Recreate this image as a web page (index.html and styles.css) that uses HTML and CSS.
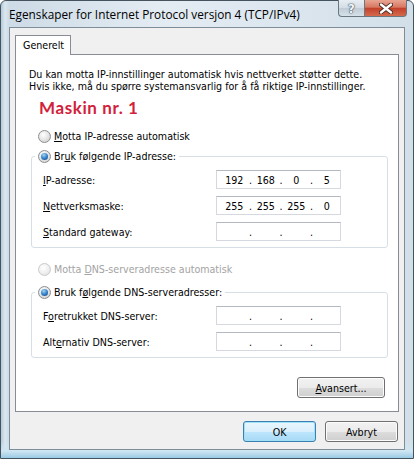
FILE: index.html
```html
<!DOCTYPE html>
<html lang="nb">
<head>
    <meta charset="UTF-8">
    <title>Egenskaper for Internet Protocol versjon 4 (TCP/IPv4)</title>
    <link rel="stylesheet" href="styles.css">
</head>
<body>
    <div class="window">
        <div class="titlebar">
            <span class="title">Egenskaper for Internet Protocol versjon 4 (TCP/IPv4)</span>
            <div class="caption-buttons">
                <span class="cap-btn help">?</span>
                <span class="cap-btn close">
                    <svg width="14" height="11" viewBox="0 0 14 11">
                        <path d="M2 1.5 L12 9.5 M12 1.5 L2 9.5" stroke="#4a2a22" stroke-width="4.2" stroke-linecap="round"/>
                        <path d="M2 1.5 L12 9.5 M12 1.5 L2 9.5" stroke="#fff" stroke-width="2.4" stroke-linecap="round"/>
                    </svg>
                </span>
            </div>
        </div>

        <div class="client">
            <div class="tabs">
                <span class="tab">Generelt</span>
            </div>

            <div class="panel">
                <p class="intro">Du kan motta IP-innstillinger automatisk hvis nettverket støtter dette.<br>Hvis ikke, må du spørre systemansvarlig for å få riktige IP-innstillinger.</p>
                <div class="machine">Maskin nr. 1</div>

                <!-- IP-adresse -->
                <div class="radio"><span class="dot"></span><span><u>M</u>otta IP-adresse automatisk</span></div>
                <fieldset class="group">
                    <legend><span class="radio"><span class="dot checked"></span><span>Br<u>u</u>k følgende IP-adresse:</span></span></legend>
                    <div class="row">
                        <span class="label"><u>I</u>P-adresse:</span>
                        <span class="ipbox"><span>192</span><i>.</i><span>168</span><i>.</i><span>0</span><i>.</i><span>5</span></span>
                    </div>
                    <div class="row">
                        <span class="label"><u>N</u>ettverksmaske:</span>
                        <span class="ipbox"><span>255</span><i>.</i><span>255</span><i>.</i><span>255</span><i>.</i><span>0</span></span>
                    </div>
                    <div class="row">
                        <span class="label"><u>S</u>tandard gateway:</span>
                        <span class="ipbox"><span></span><i>.</i><span></span><i>.</i><span></span><i>.</i><span></span></span>
                    </div>
                </fieldset>

                <!-- DNS -->
                <div class="radio disabled dns-auto"><span class="dot"></span><span>Motta <u>D</u>NS-serveradresse automatisk</span></div>
                <fieldset class="group dns-group">
                    <legend><span class="radio"><span class="dot checked"></span><span>Bruk f<u>ø</u>lgende DNS-serveradresser:</span></span></legend>
                    <div class="row">
                        <span class="label">F<u>o</u>retrukket DNS-server:</span>
                        <span class="ipbox"><span></span><i>.</i><span></span><i>.</i><span></span><i>.</i><span></span></span>
                    </div>
                    <div class="row">
                        <span class="label">Alt<u>e</u>rnativ DNS-server:</span>
                        <span class="ipbox"><span></span><i>.</i><span></span><i>.</i><span></span><i>.</i><span></span></span>
                    </div>
                </fieldset>

                <div class="adv-row">
                    <button class="btn adv"><u>A</u>vansert...</button>
                </div>
            </div>

            <div class="footer">
                <button class="btn default">OK</button>
                <button class="btn">Avbryt</button>
            </div>
        </div>
    </div>
</body>
</html>
```

FILE: styles.css
```css
body {
    margin: 0;
    padding: 0;
    background: #fff;
    font-family: "DejaVu Sans Condensed", "DejaVu Sans", sans-serif;
    font-stretch: condensed;
    font-size: 10.6px;
    color: #000;
}
.window {
    width: 414px;
    height: 459px;
    box-sizing: border-box;
    padding: 0 8px 8px 8px;
    display: flex;
    flex-direction: column;
    border: 1px solid #44535e;
    border-radius: 6px 6px 0 0;
    background:
        linear-gradient(to bottom, rgba(255,255,255,0) 440px, #cfe6f2 450px, #92c6e2 458px),
        linear-gradient(to right, #b3cad9 0px, #dce7ef 4px, #cddbe6 8px, #e4ecf3 40%, #d2dfe9 100%);
}
.titlebar {
    height: 26px;
    display: flex;
    align-items: flex-start;
}
.title {
    font-family: "Open Sans", sans-serif;
    font-stretch: normal;
    font-size: 11.8px;
    margin-top: 5px;
    color: #000;
}
.caption-buttons {
    margin-left: auto;
    margin-right: -2px;
    margin-top: -1px;
    display: flex;
    height: 18px;
}
.cap-btn {
    height: 16px;
    border: 1px solid #6a7680;
    border-top: none;
    display: flex;
    align-items: center;
    justify-content: center;
}
.help {
    width: 25px;
    border-radius: 0 0 0 4px;
    border-right: none;
    background: linear-gradient(to bottom, #e8eef3 0%, #d3dde5 50%, #bfccd6 51%, #d6e1e9 100%);
    font-family: "DejaVu Sans", sans-serif;
    font-weight: bold;
    font-size: 13px;
    color: #f4f7fa;
    text-shadow: 0 0 1px #4d5a65, 0 0 1px #4d5a65, 0 0 2px #4d5a65;
}
.close {
    width: 41px;
    border-radius: 0 0 4px 0;
    background: linear-gradient(to bottom, #e8a593 0%, #d87862 45%, #c2412a 52%, #d56a4c 100%);
}
.client {
    flex: 1;
    background: #f0f0f0;
    border: 1px solid #7d8d99;
    display: flex;
    flex-direction: column;
    padding: 0 5px 7px 5px;
}
.tabs {
    margin-top: 7px;
    display: flex;
}
.tab {
    height: 20px;
    width: 56px;
    box-sizing: border-box;
    padding-left: 7px;
    line-height: 19px;
    border: 1px solid #898c95;
    border-bottom: none;
    background: #fff;
    margin-bottom: -1px;
    position: relative;
    z-index: 1;
}
.panel {
    height: 358px;
    box-sizing: border-box;
    border: 1px solid #898c95;
    background: #fff;
    display: flex;
    flex-direction: column;
}
.intro {
    margin: 13px 0 0 13px;
    line-height: 12px;
}
.machine {
    margin: 7px 0 0 23px;
    height: 18px;
    line-height: 18px;
    font-family: "Lato", sans-serif;
    font-stretch: normal;
    font-weight: bold;
    font-size: 17px;
    letter-spacing: 0.6px;
    color: #d2213a;
}
.radio {
    display: flex;
    align-items: center;
    height: 16px;
    gap: 3px;
}
.panel > .radio {
    margin: 11px 0 0 22px;
}
.dot {
    width: 11px;
    height: 11px;
    border-radius: 50%;
    border: 1px solid #8c8f93;
    background: radial-gradient(circle at 40% 35%, #ffffff 0%, #e8e8e8 45%, #c6c6c6 100%);
    display: flex;
    align-items: center;
    justify-content: center;
}
.dot.checked::after {
    content: "";
    width: 7px;
    height: 7px;
    border-radius: 50%;
    background: radial-gradient(circle at 40% 30%, #a7d6f5 0%, #3b8ad0 45%, #0f3f7a 100%);
}
.radio.disabled {
    color: #a3a3a3;
}
.radio.disabled .dot {
    border-color: #c8cacc;
    background: radial-gradient(circle at 40% 35%, #ffffff 0%, #f0f0f0 50%, #dcdcdc 100%);
}
.group {
    margin: 4px 10px 0 15px;
    padding: 0 0 6px 11px;
    border: 1px solid #d5dfe5;
    border-radius: 3px;
    min-width: 0;
}
.group legend {
    margin-left: -8px;
    padding: 0 3px;
}
.row {
    display: flex;
    align-items: center;
    height: 19px;
    margin-top: 7px;
}
.row:first-of-type {
    margin-top: 6px;
}
.label {
    width: 173px;
}
.ipbox {
    width: 125px;
    height: 19px;
    box-sizing: border-box;
    border: 1px solid #d5d8de;
    border-top-color: #b4b8c0;
    display: flex;
    align-items: center;
    padding-left: 1px;
}
.ipbox span {
    width: 27px;
    text-align: center;
}
.ipbox span:first-child {
    width: 29px;
    padding-left: 2px;
}
.ipbox i {
    font-style: normal;
    width: 4px;
    text-align: center;
}
.dns-auto {
    margin-top: 13px !important;
}
.dns-group {
    margin-top: 7px;
}
.adv-row {
    display: flex;
    justify-content: flex-end;
    margin: 19px 13px 0 0;
}
.btn {
    font-family: inherit;
    font-stretch: condensed;
    font-size: 10.6px;
    color: #000;
    height: 21px;
    border: 1px solid #707070;
    border-radius: 3px;
    padding: 0;
    background: linear-gradient(to bottom, #f2f2f2 0%, #ebebeb 50%, #dddddd 51%, #cfcfcf 100%);
    box-shadow: inset 0 0 0 1px #fcfcfc;
}
.adv {
    width: 88px;
}
.footer {
    display: flex;
    justify-content: flex-end;
    gap: 9px;
    margin-top: 9px;
    padding-right: 1px;
}
.footer .btn {
    width: 73px;
}
.btn.default {
    border-color: #3c7fb1;
    background: linear-gradient(to bottom, #eaf6fd 0%, #d9f0fc 50%, #bee6fd 51%, #a7d9f5 100%);
    box-shadow: inset 0 0 0 1px #9fe2f7;
}
```
